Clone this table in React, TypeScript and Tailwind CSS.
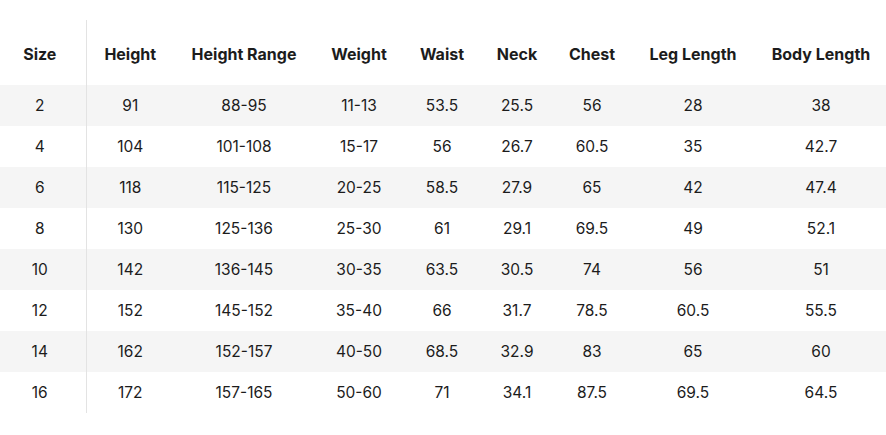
const headers = ['Size', 'Height', 'Height Range', 'Weight', 'Waist', 'Neck', 'Chest', 'Leg Length', 'Body Length'];

const rows = [
  ['2', '91', '88-95', '11-13', '53.5', '25.5', '56', '28', '38'],
  ['4', '104', '101-108', '15-17', '56', '26.7', '60.5', '35', '42.7'],
  ['6', '118', '115-125', '20-25', '58.5', '27.9', '65', '42', '47.4'],
  ['8', '130', '125-136', '25-30', '61', '29.1', '69.5', '49', '52.1'],
  ['10', '142', '136-145', '30-35', '63.5', '30.5', '74', '56', '51'],
  ['12', '152', '145-152', '35-40', '66', '31.7', '78.5', '60.5', '55.5'],
  ['14', '162', '152-157', '40-50', '68.5', '32.9', '83', '65', '60'],
  ['16', '172', '157-165', '50-60', '71', '34.1', '87.5', '69.5', '64.5'],
];

// column widths measured from the screenshot
const widths = ['w-[86px]', 'w-[88px]', 'w-[140px]', 'w-[90px]', 'w-[76px]', 'w-[74px]', 'w-[76px]', 'w-[126px]', 'w-[130px]'];

export default function App() {
  return (
    <div className="w-[886px] h-[435px] bg-white pt-[20px] font-['Inter',sans-serif] text-[#1c1c1c]">
      <table className="w-full table-fixed border-collapse">
        <colgroup>
          {widths.map((w, i) => (
            <col key={i} className={w} />
          ))}
        </colgroup>
        <thead>
          <tr className="h-[65px]">
            {headers.map((h, i) => (
              <th
                key={h}
                className={`p-0 pt-[2px] text-center text-[16px] font-bold ${i === 0 ? 'pr-[6px] border-r border-[#e3e3e3]' : ''}`}
              >
                {h}
              </th>
            ))}
          </tr>
        </thead>
        <tbody>
          {rows.map((r, ri) => (
            <tr key={ri} className={`h-[41px] ${ri % 2 === 0 ? 'bg-[#f5f5f5]' : 'bg-white'}`}>
              {r.map((c, ci) => (
                <td
                  key={ci}
                  className={`p-0 text-center text-[15.5px] ${ci === 0 ? 'pr-[6px] border-r border-[#e3e3e3]' : ''}`}
                >
                  {c}
                </td>
              ))}
            </tr>
          ))}
        </tbody>
      </table>
    </div>
  );
}
